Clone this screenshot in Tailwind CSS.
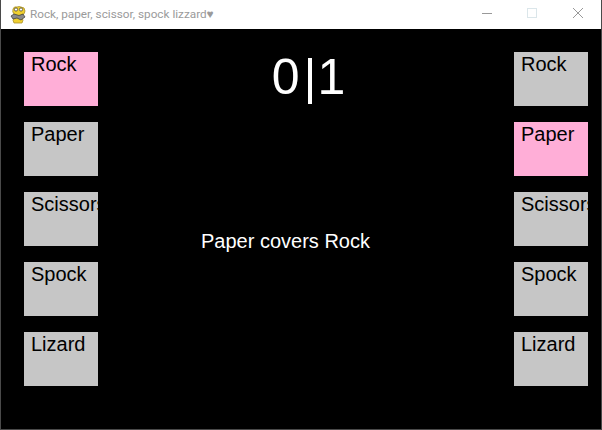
<!DOCTYPE html>
<html lang="en">
<head>
    <meta charset="UTF-8">
    <title>Rock, paper, scissor, spock lizzard</title>
    <script src="https://cdn.jsdelivr.net/npm/@tailwindcss/browser@4"></script>
</head>
<body class="w-[602px] h-[430px] overflow-hidden bg-black font-['Liberation_Sans',Arial,sans-serif]">
    <div class="h-full flex flex-col border-x border-b border-[#4a4a4a]">
        <!-- title bar -->
        <header class="h-[29px] shrink-0 bg-white flex items-center">
            <svg class="ml-[9px] w-[16px] h-[18px]" viewBox="0 0 16 18">
                <path d="M3 3 Q4 0 7 1 Q9 0 11 1 Q15 1 15 5 Q15 8 12 9 L12 12 Q14 14 12 17 L4 17 Q2 14 4 12 L4 8 Q2 6 3 3Z" fill="#f0d030" stroke="#a89030" stroke-width=".8"/>
                <circle cx="6" cy="3.5" r="1.6" fill="#fff" stroke="#333" stroke-width=".7"/>
                <circle cx="11" cy="3.5" r="1.6" fill="#fff" stroke="#333" stroke-width=".7"/>
                <path d="M1 10 L4 8 L9 9.5 L13 8 L15 11 L11 14 L7 12 L3 13Z" fill="#8a8a8a" stroke="#333" stroke-width=".7"/>
            </svg>
            <span class="ml-[4px] text-[11.75px] text-[#9a9a9a] font-['Roboto',sans-serif]">Rock, paper, scissor, spock lizzard♥</span>
            <div class="ml-auto flex items-center h-full">
                <svg class="w-[46px] h-[29px]" viewBox="0 0 46 29"><path d="M19 13.5h10" stroke="#999" fill="none"/></svg>
                <svg class="w-[46px] h-[29px]" viewBox="0 0 46 29"><rect x="18.5" y="8.5" width="9" height="9" stroke="#dbe6ea" fill="none"/></svg>
                <svg class="w-[46px] h-[29px]" viewBox="0 0 46 29"><path d="M18 8l10 10M28 8l-10 10" stroke="#999" fill="none"/></svg>
            </div>
        </header>

        <!-- game -->
        <main class="flex-1 flex pt-[23px] pl-[23px] pr-[13px]">
            <div class="w-[74px] flex flex-col gap-4">
                <div class="h-[54px] bg-[#ffaed7] px-[7px] text-[20px] leading-[24px] overflow-hidden text-black">Rock</div>
                <div class="h-[54px] bg-[#c6c6c6] px-[7px] text-[20px] leading-[24px] overflow-hidden text-black">Paper</div>
                <div class="h-[54px] bg-[#c6c6c6] pl-[7px] text-[20px] leading-[24px] overflow-hidden whitespace-nowrap text-black">Scissors</div>
                <div class="h-[54px] bg-[#c6c6c6] px-[7px] text-[20px] leading-[24px] overflow-hidden text-black">Spock</div>
                <div class="h-[54px] bg-[#c6c6c6] px-[7px] text-[20px] leading-[24px] overflow-hidden text-black">Lizard</div>
            </div>
            <div class="flex-1 flex flex-col text-white">
                <div class="self-center ml-[5px] text-[50px] leading-[50px]"><span class="mr-[4px]">0</span>|<span class="ml-[1px]">1</span></div>
                <div class="ml-[103px] mt-[127px] text-[20px] leading-[24px]">Paper covers Rock</div>
            </div>
            <div class="w-[74px] flex flex-col gap-4">
                <div class="h-[54px] bg-[#c6c6c6] px-[7px] text-[20px] leading-[24px] overflow-hidden text-black">Rock</div>
                <div class="h-[54px] bg-[#ffaed7] px-[7px] text-[20px] leading-[24px] overflow-hidden text-black">Paper</div>
                <div class="h-[54px] bg-[#c6c6c6] pl-[7px] text-[20px] leading-[24px] overflow-hidden whitespace-nowrap text-black">Scissors</div>
                <div class="h-[54px] bg-[#c6c6c6] px-[7px] text-[20px] leading-[24px] overflow-hidden text-black">Spock</div>
                <div class="h-[54px] bg-[#c6c6c6] px-[7px] text-[20px] leading-[24px] overflow-hidden text-black">Lizard</div>
            </div>
        </main>
    </div>
</body>
</html>
